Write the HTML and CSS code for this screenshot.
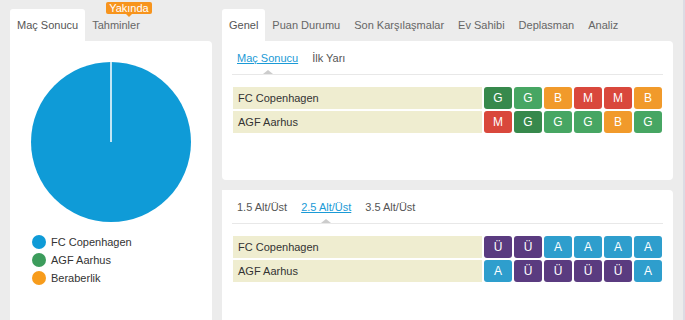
FILE: index.html
```html
<!DOCTYPE html>
<html lang="tr">
<head>
  <meta charset="UTF-8">
  <meta name="viewport" content="width=device-width, initial-scale=1.0">
  <title>Maç Analizi</title>
  <link rel="stylesheet" href="styles.css">
</head>
<body>
  <div class="page">
    <div class="main">
      <div class="side">
        <div class="tabs">
          <span class="tab active">Maç Sonucu</span>
          <span class="tab">Tahminler<span class="soon">Yakında</span></span>
        </div>
        <div class="panel side-panel">
          <svg class="pie" width="160" height="160" viewBox="0 0 160 160">
            <circle cx="80" cy="80" r="80" fill="#0f9bd7"/>
            <line x1="80" y1="0" x2="80" y2="80" stroke="#fff" stroke-width="1.5"/>
          </svg>
          <ul class="legend">
            <li><span class="dot blue"></span>FC Copenhagen</li>
            <li><span class="dot green"></span>AGF Aarhus</li>
            <li><span class="dot orange"></span>Beraberlik</li>
          </ul>
        </div>
      </div>

      <div class="content">
        <div class="tabs">
          <span class="tab active">Genel</span>
          <span class="tab">Puan Durumu</span>
          <span class="tab">Son Karşılaşmalar</span>
          <span class="tab">Ev Sahibi</span>
          <span class="tab">Deplasman</span>
          <span class="tab">Analiz</span>
        </div>

        <div class="panel box first">
          <div class="subtabs">
            <span class="subtab active">Maç Sonucu</span>
            <span class="subtab">İlk Yarı</span>
          </div>
          <div class="rows">
            <div class="row">
              <div class="team">FC Copenhagen</div>
              <span class="res g dark">G</span>
              <span class="res g">G</span>
              <span class="res b">B</span>
              <span class="res m">M</span>
              <span class="res m">M</span>
              <span class="res b">B</span>
            </div>
            <div class="row">
              <div class="team">AGF Aarhus</div>
              <span class="res m">M</span>
              <span class="res g dark">G</span>
              <span class="res g">G</span>
              <span class="res g">G</span>
              <span class="res b">B</span>
              <span class="res g">G</span>
            </div>
          </div>
        </div>

        <div class="panel box">
          <div class="subtabs">
            <span class="subtab">1.5 Alt/Üst</span>
            <span class="subtab active">2.5 Alt/Üst</span>
            <span class="subtab">3.5 Alt/Üst</span>
          </div>
          <div class="rows">
            <div class="row">
              <div class="team">FC Copenhagen</div>
              <span class="res u">Ü</span>
              <span class="res u">Ü</span>
              <span class="res a">A</span>
              <span class="res a">A</span>
              <span class="res a">A</span>
              <span class="res a">A</span>
            </div>
            <div class="row">
              <div class="team">AGF Aarhus</div>
              <span class="res a">A</span>
              <span class="res u">Ü</span>
              <span class="res u">Ü</span>
              <span class="res u">Ü</span>
              <span class="res u">Ü</span>
              <span class="res a">A</span>
            </div>
          </div>
        </div>
      </div>
    </div>
    <div class="edge"></div>
  </div>
</body>
</html>
```

FILE: styles.css
```css
body {
  margin: 0;
  background: #ececec;
  font-family: "Liberation Sans", Arial, sans-serif;
  font-size: 11px;
  color: #333;
  overflow: hidden;
}
.page {
  display: flex;
  height: 320px;
}
.main {
  display: flex;
  gap: 10px;
  padding: 9px 0 0 10px;
}
.edge {
  margin-left: auto;
  width: 2px;
  background: #dcdce4;
}

/* tabs */
.tabs {
  display: flex;
  height: 32px;
}
.tab {
  position: relative;
  padding: 0 7px;
  line-height: 32px;
  color: #666;
}
.tab.active {
  background: #fff;
  color: #555;
  border-radius: 3px 3px 0 0;
}
.soon {
  position: absolute;
  top: -7px;
  left: 21px;
  padding: 0 3px;
  line-height: 12px;
  background: #f7941d;
  color: #fff;
  border-radius: 2px;
}
.soon::after {
  content: "";
  position: absolute;
  left: 50%;
  bottom: -3px;
  margin-left: -3px;
  border-left: 3px solid transparent;
  border-right: 3px solid transparent;
  border-top: 3px solid #f7941d;
}

.panel {
  background: #fff;
  border-radius: 0 4px 4px 4px;
}

/* left column */
.side {
  width: 202px;
}
.side-panel {
  height: 290px;
  padding: 21px 0 0 21px;
  box-sizing: border-box;
}
.pie {
  display: block;
}
.legend {
  list-style: none;
  margin: 11px 0 0 1px;
  padding: 0;
}
.legend li {
  display: flex;
  align-items: center;
  gap: 5px;
  height: 18px;
}
.dot {
  width: 14px;
  height: 14px;
  border-radius: 50%;
}
.dot.blue { background: #0f9bd7; }
.dot.green { background: #3c9c5c; }
.dot.orange { background: #f79c1c; }

/* right column */
.content {
  width: 451px;
}
.box {
  height: 139px;
}
.box.first {
  margin-bottom: 10px;
}
.subtabs {
  display: flex;
  gap: 4px;
  margin: 0 10px;
  padding: 8px 0 0 0;
  border-bottom: 1px solid #e8e8e8;
}
.subtab {
  position: relative;
  padding: 0 5px 7px;
  line-height: 18px;
  color: #555;
}
.subtab.active {
  color: #1a9ad6;
  text-decoration: underline;
}
.subtab.active::after {
  content: "";
  position: absolute;
  left: 50%;
  bottom: 0;
  margin-left: -5px;
  border-left: 5px solid transparent;
  border-right: 5px solid transparent;
  border-bottom: 4px solid #ccc;
}
.rows {
  display: flex;
  flex-direction: column;
  gap: 2px;
  padding: 12px 11px 0;
}
.row {
  display: flex;
  gap: 2px;
  height: 22px;
}
.team {
  flex: 1;
  padding-left: 5px;
  line-height: 22px;
  background: #efedd0;
}
.res {
  width: 28px;
  line-height: 22px;
  text-align: center;
  color: #fff;
  font-size: 12px;
  border-radius: 3px;
}
.res.g { background: #47a663; }
.res.g.dark { background: #37894c; }
.res.b { background: #f19a2b; }
.res.m { background: #d9483c; }
.res.u { background: #5a3b80; }
.res.a { background: #2e9ecd; }
```
